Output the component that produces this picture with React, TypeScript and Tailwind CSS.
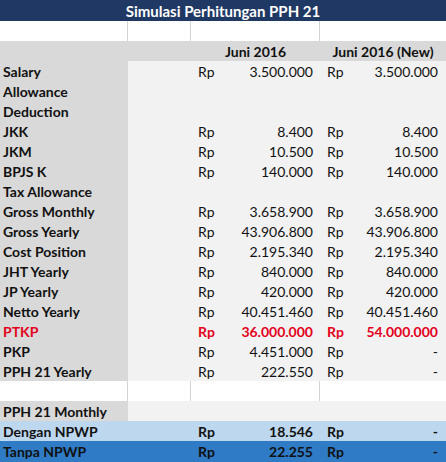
type Row = {
  label: string;
  a?: string;
  b?: string;
  red?: boolean;
};

const rows: Row[] = [
  { label: "Salary", a: "3.500.000", b: "3.500.000" },
  { label: "Allowance" },
  { label: "Deduction" },
  { label: "JKK", a: "8.400", b: "8.400" },
  { label: "JKM", a: "10.500", b: "10.500" },
  { label: "BPJS K", a: "140.000", b: "140.000" },
  { label: "Tax Allowance" },
  { label: "Gross Monthly", a: "3.658.900", b: "3.658.900" },
  { label: "Gross Yearly", a: "43.906.800", b: "43.906.800" },
  { label: "Cost Position", a: "2.195.340", b: "2.195.340" },
  { label: "JHT Yearly", a: "840.000", b: "840.000" },
  { label: "JP Yearly", a: "420.000", b: "420.000" },
  { label: "Netto Yearly", a: "40.451.460", b: "40.451.460" },
  { label: "PTKP", a: "36.000.000", b: "54.000.000", red: true },
  { label: "PKP", a: "4.451.000", b: "-" },
  { label: "PPH 21 Yearly", a: "222.550", b: "-" },
];

function BlankRow() {
  return (
    <div className="flex h-5 bg-white">
      <div className="w-[128px] border-r border-[#d4d4d4]" />
      <div className="w-[63px] border-r border-[#d4d4d4]" />
      <div className="w-[129px] border-r border-[#d4d4d4]" />
      <div className="flex-1" />
    </div>
  );
}

function Money({ v, wide }: { v?: string; wide?: boolean }) {
  return (
    <div
      className={`flex justify-between pl-[7px] ${wide ? "w-[129px] pr-[7px]" : "flex-1 pr-[8px]"}`}
    >
      {v && <span>Rp</span>}
      {v && <span>{v}</span>}
    </div>
  );
}

export default function App() {
  return (
    <div className="w-[446px] h-[462px] overflow-hidden bg-white text-[14px] text-[#111] font-['Lato',sans-serif] leading-[22px]">
      <div className="h-[21px] bg-[#203864] text-white font-bold text-[15px] flex items-center justify-center">
        Simulasi Perhitungan PPH 21
      </div>

      <BlankRow />

      {/* Header */}
      <div className="flex h-5 bg-[#d9d9d9] font-bold">
        <div className="w-[191px]" />
        <div className="w-[129px] text-center">Juni 2016</div>
        <div className="flex-1 text-center">Juni 2016 (New)</div>
      </div>

      {rows.map((r) => (
        <div
          key={r.label}
          className={`flex h-5 bg-[#f2f2f2] ${r.red ? "text-[#e3001b] font-bold" : ""}`}
        >
          <div className="w-[128px] bg-[#d9d9d9] pl-[3px] font-bold">{r.label}</div>
          <div className="w-[63px]" />
          <Money v={r.a} wide />
          <Money v={r.b} />
        </div>
      ))}

      <BlankRow />

      <div className="flex h-5 bg-[#f2f2f2] font-bold">
        <div className="w-[128px] bg-[#d9d9d9] pl-[3px]">PPH 21 Monthly</div>
      </div>

      <div className="flex h-5 bg-[#bdd7ee] font-bold">
        <div className="w-[128px] pl-[3px]">Dengan NPWP</div>
        <div className="w-[63px]" />
        <Money v="18.546" wide />
        <Money v="-" />
      </div>
      <div className="flex h-[21px] bg-[#2f7bc6] font-bold">
        <div className="w-[128px] pl-[3px]">Tanpa NPWP</div>
        <div className="w-[63px]" />
        <Money v="22.255" wide />
        <Money v="-" />
      </div>
    </div>
  );
}
